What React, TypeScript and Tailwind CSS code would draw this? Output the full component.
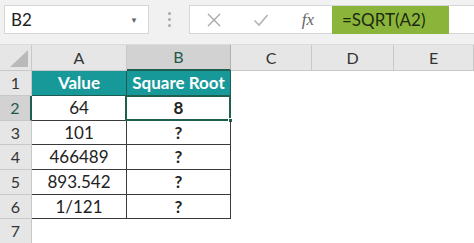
const cols = ['A', 'B', 'C', 'D', 'E']

const data: [string, string][] = [
  ['64', '8'],
  ['101', '?'],
  ['466489', '?'],
  ['893.542', '?'],
  ['1/121', '?'],
]

const rowH = ['h-[25px]', 'h-[25px]', 'h-[24px]', 'h-[25px]', 'h-[25px]', 'h-[24px]', 'h-[25px]']

export default function App() {
  return (
    <div className="w-[474px] h-[243px] overflow-hidden bg-white text-[#222]" style={{ fontFamily: 'Lato, "Open Sans", sans-serif' }}>
      {/* formula bar */}
      <div className="h-[45px] bg-[#f1f1f1] flex items-start pt-[5px] pl-[4px] border-b border-[#dcdcdc]">
        <div className="w-[145px] h-[29px] bg-white border border-[#d6d6d6] flex items-center justify-between pl-[6px] pr-[10px]">
          <span className="text-[17px]">B2</span>
          <span className="text-[#666] text-[8px]">▼</span>
        </div>
        <div className="w-[40px] h-[29px] flex flex-col items-center justify-center gap-[3px]">
          <span className="w-[3px] h-[3px] rounded-full bg-[#aaa]" />
          <span className="w-[3px] h-[3px] rounded-full bg-[#aaa]" />
          <span className="w-[3px] h-[3px] rounded-full bg-[#aaa]" />
        </div>
        <div className="flex-1 h-[29px] bg-white border-y border-l border-[#d6d6d6] flex items-center">
          <div className="w-[47px] flex justify-center">
            <svg width="16" height="16" viewBox="0 0 16 16" stroke="#a8a8a8" strokeWidth="1.4" fill="none">
              <path d="M2 2 L14 14 M14 2 L2 14" />
            </svg>
          </div>
          <div className="w-[47px] flex justify-center">
            <svg width="16" height="14" viewBox="0 0 16 14" stroke="#b4b4b4" strokeWidth="1.6" fill="none">
              <path d="M1.5 7.5 L6 12 L14.5 2" />
            </svg>
          </div>
          <div className="w-[48px] flex justify-center">
            <span className="italic text-[#666] text-[17px]" style={{ fontFamily: '"Liberation Serif", serif' }}>
              fx
            </span>
          </div>
          <div className="w-[117px] h-[28px] bg-[#8bb53a] flex items-center pl-[10px] text-[17px] text-[#1d2a12]">
            =SQRT(A2)
          </div>
        </div>
      </div>

      {/* grid */}
      <div className="grid grid-cols-[32px_95px_104px_81px_82px_1fr]">
        {/* header row */}
        <div className="h-[26px] bg-[#e6e6e6] border-r border-b border-[#c8c8c8] relative">
          <svg className="absolute right-[3px] bottom-[3px]" width="18" height="17" viewBox="0 0 18 17">
            <path d="M18 0 L18 17 L0 17 Z" fill="#b9b9b9" />
          </svg>
        </div>
        {cols.map((c) => (
          <div
            key={c}
            className={`h-[26px] flex items-center justify-center text-[16px] border-r ${
              c === 'B'
                ? 'bg-[#d2d2d2] text-[#1e5a4c] border-b-2 border-b-[#1f5f4f] border-r-[#b0b0b0]'
                : 'bg-[#e6e6e6] text-[#333] border-b border-[#c8c8c8]'
            }`}
          >
            {c}
          </div>
        ))}

        {/* rows */}
        {rowH.map((h, i) => {
          const n = i + 1
          const sel = n === 2
          return (
            <Row key={n} n={n} h={h} sel={sel} />
          )
        })}
      </div>
    </div>
  )
}

function Row({ n, h, sel }: { n: number; h: string; sel: boolean }) {
  const head = (
    <div
      className={`${h} flex items-center justify-center text-[16px] border-b ${
        sel
          ? 'bg-[#d2d2d2] text-[#1e5a4c] border-r-2 border-r-[#1f5f4f] border-b-[#c8c8c8]'
          : 'bg-[#e6e6e6] text-[#333] border-r border-[#c8c8c8]'
      }`}
    >
      {n}
    </div>
  )

  if (n === 1) {
    return (
      <>
        {head}
        <div className={`${h} bg-[#17999a] text-white font-bold text-[17px] flex items-center justify-center border-r border-b border-[#1d5b55]`}>
          Value
        </div>
        <div className={`${h} bg-[#17999a] text-white font-bold text-[17px] flex items-center justify-center border-r border-b border-[#1d5b55]`}>
          Square Root
        </div>
        <Blank h={h} />
        <Blank h={h} />
        <Blank h={h} />
      </>
    )
  }

  if (n <= 6) {
    const [a, b] = data[n - 2]
    return (
      <>
        {head}
        <div className={`${h} flex items-center justify-center text-[17px] border-r border-b border-[#3a3a3a] ${sel ? 'border-l-0' : ''}`}>
          {a}
        </div>
        <div className={`${h} relative flex items-center justify-center text-[17px] font-bold border-r border-b border-[#3a3a3a]`}>
          {b}
          {sel && (
            <>
              <div className="absolute -left-[2px] -top-[1px] -right-[1px] -bottom-[1px] border-2 border-[#1f5f4f]" />
              <div className="absolute -right-[3px] -bottom-[3px] w-[5px] h-[5px] bg-[#1f5f4f] border border-white" />
            </>
          )}
        </div>
        <Blank h={h} />
        <Blank h={h} />
        <Blank h={h} />
      </>
    )
  }

  return (
    <>
      {head}
      <Blank h={h} />
      <Blank h={h} />
      <Blank h={h} />
      <Blank h={h} />
      <Blank h={h} />
    </>
  )
}

function Blank({ h }: { h: string }) {
  return <div className={`${h} bg-white`} />
}
